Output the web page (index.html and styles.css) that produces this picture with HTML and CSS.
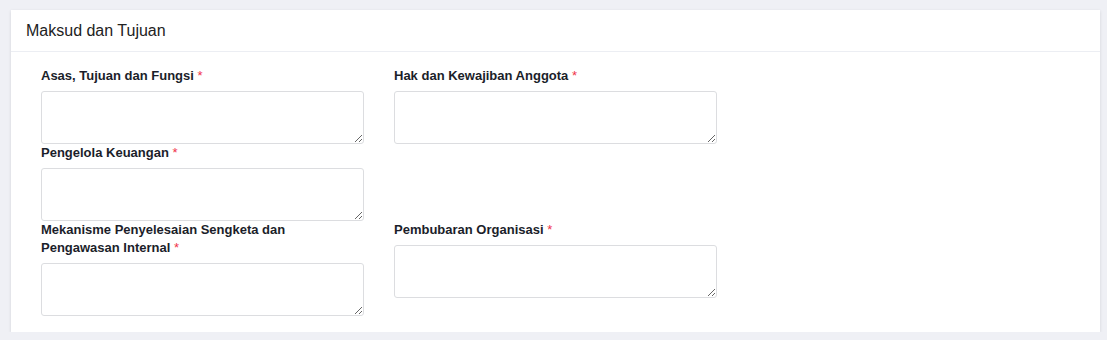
FILE: index.html
```html
<!DOCTYPE html>
<html lang="id">
<head>
    <meta charset="UTF-8">
    <meta name="viewport" content="width=device-width, initial-scale=1.0">
    <title>Maksud dan Tujuan</title>
    <link rel="stylesheet" href="styles.css">
</head>
<body>

    <div class="card">
        <div class="card-header">Maksud dan Tujuan</div>
        <div class="card-body">
            <div class="form-grid">
                <div class="form-group">
                    <label for="asas">Asas, Tujuan dan Fungsi <span class="req">*</span></label>
                    <textarea id="asas"></textarea>
                </div>
                <div class="form-group">
                    <label for="hak">Hak dan Kewajiban Anggota <span class="req">*</span></label>
                    <textarea id="hak"></textarea>
                </div>
                <div class="form-group">
                    <label for="keuangan">Pengelola Keuangan <span class="req">*</span></label>
                    <textarea id="keuangan"></textarea>
                </div>
                <div class="form-group empty"></div>
                <div class="form-group">
                    <label for="sengketa">Mekanisme Penyelesaian Sengketa dan Pengawasan Internal <span class="req">*</span></label>
                    <textarea id="sengketa"></textarea>
                </div>
                <div class="form-group">
                    <label for="pembubaran">Pembubaran Organisasi <span class="req">*</span></label>
                    <textarea id="pembubaran"></textarea>
                </div>
            </div>
        </div>
    </div>

</body>
</html>
```

FILE: styles.css
```css
body { margin: 0; padding: 10px 7px 0 11px; background-color: #eff0f5; font-family: "Liberation Sans", Arial, sans-serif; color: #212529; }
.card { background: #fff; box-shadow: 0 1px 3px rgba(0,0,0,0.12); }
.card-header { height: 41px; padding: 0 15px; display: flex; align-items: center; font-size: 16px; color: #222; border-bottom: 1px solid #eceef3; }
.card-body { padding: 15px 15px 16px 30px; }
.form-grid { display: grid; grid-template-columns: 323px 323px; column-gap: 30px; align-items: start; }
.form-group { display: flex; flex-direction: column; }
label { font-weight: bold; font-size: 13px; line-height: 18px; margin-bottom: 6px; color: #1b1e2a; }
.req { color: #f0334a; font-weight: normal; }
textarea { box-sizing: border-box; width: 100%; height: 53px; border: 1px solid #dcdde0; border-radius: 3px; padding: 6px 10px; font-family: inherit; font-size: 13px; resize: vertical; margin: 0; display: block; }
```
